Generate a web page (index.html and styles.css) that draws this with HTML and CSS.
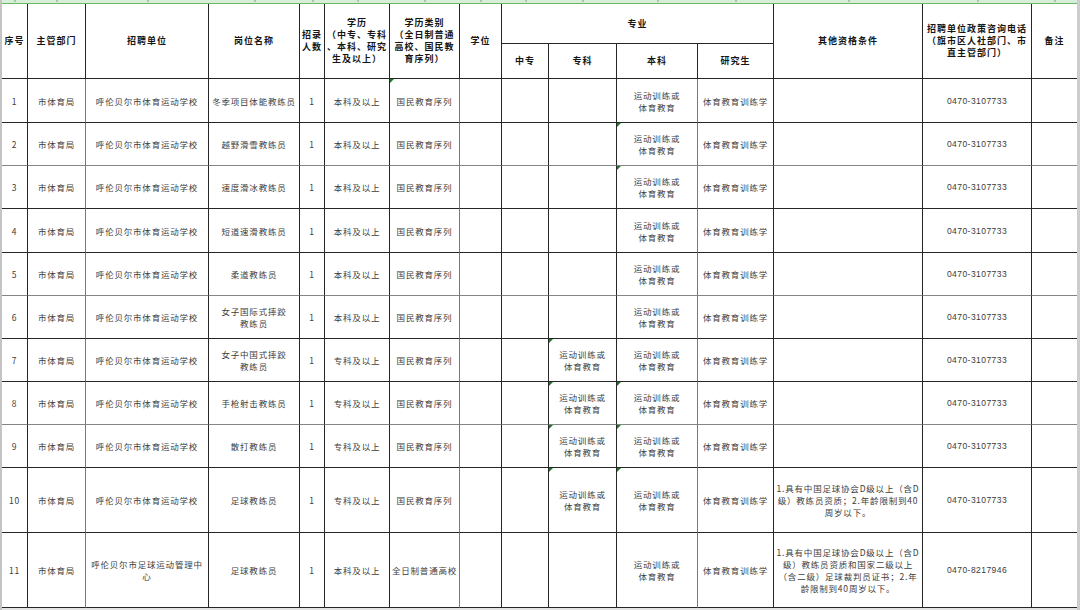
FILE: index.html
```html
<!DOCTYPE html>
<html lang="zh-CN">
<head>
<meta charset="utf-8">
<title>招聘岗位表</title>
<link rel="stylesheet" href="styles.css">
</head>
<body>
<div class="sheet">
  <div class="colbar">
    <span></span><span></span><span></span><span></span><span></span><span></span><span></span><span></span><span></span><span></span><span></span><span></span><span></span><span></span><span></span>
  </div>
  <table class="grid">
    <colgroup>
      <col class="w26"><col class="w58"><col class="w123"><col class="w91"><col class="w25"><col class="w65"><col class="w70"><col class="w42"><col class="w47"><col class="w68"><col class="w81"><col class="w76"><col class="w149"><col class="w109"><col class="w45">
    </colgroup>
    <thead>
      <tr class="hh1">
        <th rowspan="2">序号</th>
        <th rowspan="2">主管部门</th>
        <th rowspan="2">招聘单位</th>
        <th rowspan="2">岗位名称</th>
        <th rowspan="2">招录<br>人数</th>
        <th rowspan="2">学历<br>（中专、专科<br>、本科、研究<br>生及以上）</th>
        <th rowspan="2">学历类别<br>（全日制普通<br>高校、国民教<br>育序列）</th>
        <th rowspan="2">学位</th>
        <th colspan="4">专业</th>
        <th rowspan="2">其他资格条件</th>
        <th rowspan="2">招聘单位政策咨询电话<br>（旗市区人社部门、市<br>直主管部门）</th>
        <th rowspan="2" class="last">备注</th>
      </tr>
      <tr class="hh2">
        <th>中专</th><th>专科</th><th>本科</th><th>研究生</th>
      </tr>
    </thead>
    <tbody>
      <tr class="r44">
        <td>1</td><td>市体育局</td><td>呼伦贝尔市体育运动学校</td><td>冬季项目体能教练员</td><td>1</td><td>本科及以上</td><td class="tri">国民教育序列</td><td></td><td></td><td></td><td>运动训练或<br>体育教育</td><td>体育教育训练学</td><td></td><td class="num">0470-3107733</td><td class="last"></td>
      </tr>
      <tr class="r43 soft">
        <td>2</td><td>市体育局</td><td>呼伦贝尔市体育运动学校</td><td>越野滑雪教练员</td><td>1</td><td>本科及以上</td><td>国民教育序列</td><td></td><td></td><td></td><td class="tri">运动训练或<br>体育教育</td><td>体育教育训练学</td><td></td><td class="num">0470-3107733</td><td class="last"></td>
      </tr>
      <tr class="r43">
        <td>3</td><td>市体育局</td><td>呼伦贝尔市体育运动学校</td><td>速度滑冰教练员</td><td>1</td><td>本科及以上</td><td>国民教育序列</td><td></td><td></td><td></td><td class="tri">运动训练或<br>体育教育</td><td>体育教育训练学</td><td></td><td class="num">0470-3107733</td><td class="last"></td>
      </tr>
      <tr class="r44">
        <td>4</td><td>市体育局</td><td>呼伦贝尔市体育运动学校</td><td>短道速滑教练员</td><td>1</td><td>本科及以上</td><td>国民教育序列</td><td></td><td></td><td></td><td>运动训练或<br>体育教育</td><td>体育教育训练学</td><td></td><td class="num">0470-3107733</td><td class="last"></td>
      </tr>
      <tr class="r43 soft">
        <td>5</td><td>市体育局</td><td>呼伦贝尔市体育运动学校</td><td>柔道教练员</td><td>1</td><td>本科及以上</td><td>国民教育序列</td><td></td><td></td><td></td><td>运动训练或<br>体育教育</td><td>体育教育训练学</td><td></td><td class="num">0470-3107733</td><td class="last"></td>
      </tr>
      <tr class="r43">
        <td>6</td><td>市体育局</td><td>呼伦贝尔市体育运动学校</td><td>女子国际式摔跤<br>教练员</td><td>1</td><td>本科及以上</td><td>国民教育序列</td><td></td><td></td><td></td><td>运动训练或<br>体育教育</td><td>体育教育训练学</td><td></td><td class="num">0470-3107733</td><td class="last"></td>
      </tr>
      <tr class="r43">
        <td>7</td><td>市体育局</td><td>呼伦贝尔市体育运动学校</td><td>女子中国式摔跤<br>教练员</td><td>1</td><td>专科及以上</td><td>国民教育序列</td><td></td><td></td><td class="tri">运动训练或<br>体育教育</td><td>运动训练或<br>体育教育</td><td>体育教育训练学</td><td></td><td class="num">0470-3107733</td><td class="last"></td>
      </tr>
      <tr class="r43 soft">
        <td>8</td><td>市体育局</td><td>呼伦贝尔市体育运动学校</td><td>手枪射击教练员</td><td>1</td><td>专科及以上</td><td>国民教育序列</td><td></td><td></td><td class="tri">运动训练或<br>体育教育</td><td class="tri">运动训练或<br>体育教育</td><td>体育教育训练学</td><td></td><td class="num">0470-3107733</td><td class="last"></td>
      </tr>
      <tr class="r43">
        <td>9</td><td>市体育局</td><td>呼伦贝尔市体育运动学校</td><td>散打教练员</td><td>1</td><td>专科及以上</td><td>国民教育序列</td><td></td><td></td><td class="tri">运动训练或<br>体育教育</td><td class="tri">运动训练或<br>体育教育</td><td>体育教育训练学</td><td></td><td class="num">0470-3107733</td><td class="last"></td>
      </tr>
      <tr class="r65">
        <td>10</td><td>市体育局</td><td>呼伦贝尔市体育运动学校</td><td>足球教练员</td><td>1</td><td>专科及以上</td><td>国民教育序列</td><td></td><td></td><td class="tri">运动训练或<br>体育教育</td><td class="tri">运动训练或<br>体育教育</td><td>体育教育训练学</td><td>1.具有中国足球协会D级以上（含D<br>级）教练员资质；2.年龄限制到40<br>周岁以下。</td><td class="num">0470-3107733</td><td class="last"></td>
      </tr>
      <tr class="r75">
        <td>11</td><td>市体育局</td><td>呼伦贝尔市足球运动管理中<br>心</td><td>足球教练员</td><td>1</td><td>本科及以上</td><td>全日制普通高校</td><td></td><td></td><td></td><td>运动训练或<br>体育教育</td><td>体育教育训练学</td><td>1.具有中国足球协会D级以上（含D<br>级）教练员资质和国家二级以上<br>（含二级）足球裁判员证书；2.年<br>龄限制到40周岁以下。</td><td class="num">0470-8217946</td><td class="last"></td>
      </tr>
    </tbody>
  </table>
</div>
</body>
</html>
```

FILE: styles.css
```css
* { box-sizing: border-box; }

html, body {
  margin: 0;
  padding: 0;
  background: #ffffff;
}

body {
  width: 1080px;
  height: 610px;
  overflow: hidden;
  font-family: "Noto Sans CJK SC", "Noto Sans", sans-serif;
}

.sheet {
  width: 1080px;
  height: 610px;
  border-left: 2px solid #c4c4c4;
  border-right: 3px solid #cdcdcd;
  background: #e4e4e4;
}

.colbar {
  display: grid;
  grid-template-columns: 26px 58px 123px 91px 25px 65px 70px 42px 47px 68px 81px 76px 149px 109px 45px;
  height: 4px;
  background: #d8eed8;
  border-bottom: 1px solid #69b869;
}

.colbar span {
  display: flex;
  justify-content: center;
}

.colbar span::after {
  content: "";
  width: 2px;
  height: 2px;
  background: #9fcf9f;
}

.grid {
  border-collapse: separate;
  border-spacing: 0;
  table-layout: fixed;
  width: 1075px;
  background: #ffffff;
}

.w26 { width: 26px; }
.w58 { width: 58px; }
.w123 { width: 123px; }
.w91 { width: 91px; }
.w25 { width: 25px; }
.w65 { width: 65px; }
.w70 { width: 70px; }
.w42 { width: 42px; }
.w47 { width: 47px; }
.w68 { width: 68px; }
.w81 { width: 81px; }
.w76 { width: 76px; }
.w149 { width: 149px; }
.w109 { width: 109px; }
.w45 { width: 45px; }

.grid th,
.grid td {
  padding: 0;
  border-right: 1px solid #262626;
  border-bottom: 1px solid #262626;
  text-align: center;
  vertical-align: middle;
  line-height: 12px;
  white-space: nowrap;
  overflow: hidden;
}

.grid th {
  font-size: 9px;
  font-weight: 700;
  letter-spacing: 1px;
  color: #151515;
}

.grid td {
  font-size: 8.5px;
  font-weight: 400;
  letter-spacing: 0.8px;
  color: #3d3d3d;
  position: relative;
}

.grid td:nth-child(2),
.grid td:nth-child(7),
.grid td:nth-child(11) {
  border-right-color: #7a7a7a;
}

.grid tr.soft td {
  border-bottom-color: #858585;
}

.grid .last {
  border-right: none;
}

.hh1 { height: 40px; }
.hh2 { height: 35px; }
.r44 { height: 44px; }
.r43 { height: 43px; }
.r65 { height: 65px; }
.r75 { height: 75px; }

.grid td.num {
  font-family: "Liberation Sans", "Noto Sans", sans-serif;
  font-size: 8.5px;
  letter-spacing: 0.45px;
  color: #3a3a3a;
}

.grid td.tri::before {
  content: "";
  position: absolute;
  top: 0;
  left: 0;
  width: 0;
  height: 0;
  border-top: 4px solid #1f7a1f;
  border-right: 4px solid transparent;
}
```
